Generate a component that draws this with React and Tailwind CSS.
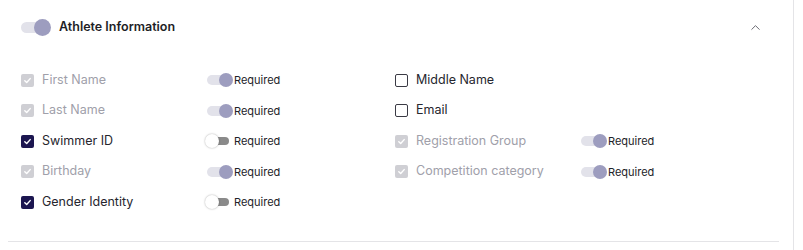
import { ChevronUp } from "lucide-react";

// Athlete Information — field picker card.
// Each field: checkbox (locked fields are greyed) + a "Required" switch.

const rows = [
  [
    { label: "First Name", state: "locked", required: true },
    { label: "Middle Name", state: "off" },
  ],
  [
    { label: "Last Name", state: "locked", required: true },
    { label: "Email", state: "off" },
  ],
  [
    { label: "Swimmer ID", state: "on", required: false },
    { label: "Registration Group", state: "locked", required: true },
  ],
  [
    { label: "Birthday", state: "locked", required: true },
    { label: "Competition category", state: "locked", required: true },
  ],
  [{ label: "Gender Identity", state: "on", required: false }, null],
];

function Check({ state }) {
  if (state === "off")
    return (
      <span className="w-[13px] h-[13px] rounded-[2px] border-[1.5px] border-[#3a3a44] bg-white flex-none" />
    );
  const bg = state === "locked" ? "bg-[#cfcfd4]" : "bg-[#1c1650]";
  return (
    <span
      className={`w-[13px] h-[13px] rounded-[2px] ${bg} flex-none flex items-center justify-center`}
    >
      <svg width="9" height="9" viewBox="0 0 10 10" fill="none">
        <path
          d="M2 5.2 4.1 7.2 8 2.9"
          stroke="white"
          strokeWidth="1.6"
          strokeLinecap="round"
          strokeLinejoin="round"
        />
      </svg>
    </span>
  );
}

function Switch({ on }) {
  return (
    <span className="relative w-[26px] h-[16px] flex-none">
      {on ? (
        <>
          <span className="absolute left-0 top-[3px] w-[22px] h-[10px] rounded-full bg-[#e2e2ea]" />
          <span className="absolute right-0 top-px w-[14px] h-[14px] rounded-full bg-[#9d9dbf]" />
        </>
      ) : (
        <>
          <span className="absolute left-[6px] top-[4px] w-[16px] h-[8px] rounded-full bg-[#8a8a8a]" />
          <span className="absolute -left-[2px] top-px w-[14px] h-[14px] rounded-full bg-white shadow-[0_0_2px_rgba(0,0,0,0.35)]" />
        </>
      )}
    </span>
  );
}

function Field({ field }) {
  if (!field) return <div />;
  const muted = field.state === "locked";
  return (
    <div className="flex items-center h-[30.5px]">
      <div className="w-[186px] flex items-center gap-[8px]">
        <Check state={field.state} />
        <span
          className={`text-[12.5px] ${muted ? "text-[#a0a0aa]" : "text-[#26262e]"}`}
        >
          {field.label}
        </span>
      </div>
      {field.state !== "off" && (
        <div className="flex items-center">
          <Switch on={field.required} />
          <span className="ml-[1px] text-[11px] text-[#222228]">Required</span>
        </div>
      )}
    </div>
  );
}

export default function App() {
  return (
    <div
      className="w-[794px] h-[250px] border-r border-[#e4e4e7] bg-white"
      style={{ fontFamily: "Inter, 'Noto Sans', sans-serif" }}
    >
      <div className="ml-2 mr-[14px] border-b border-[#e4e4e7] h-[242px]">
        <div className="h-[52px] pt-[2px] flex items-center pl-[13px] pr-[16px]">
          <span className="relative w-[30px] h-[17px] flex-none">
            <span className="absolute left-0 top-[3px] w-[24px] h-[11px] rounded-full bg-[#e2e2ea]" />
            <span className="absolute right-0 top-0 w-[17px] h-[17px] rounded-full bg-[#9d9dbf]" />
          </span>
          <span className="ml-[8px] text-[12.5px] font-semibold text-[#1e1e26]">
            Athlete Information
          </span>
          <ChevronUp
            size={15}
            strokeWidth={1.6}
            className="ml-auto text-[#6a6a72]"
          />
        </div>
        <div className="pt-[13px] pl-[13px] grid grid-cols-[374px_1fr]">
          {rows.map((row, i) => (
            <div key={i} className="contents">
              <Field field={row[0]} />
              <Field field={row[1]} />
            </div>
          ))}
        </div>
      </div>
    </div>
  );
}
